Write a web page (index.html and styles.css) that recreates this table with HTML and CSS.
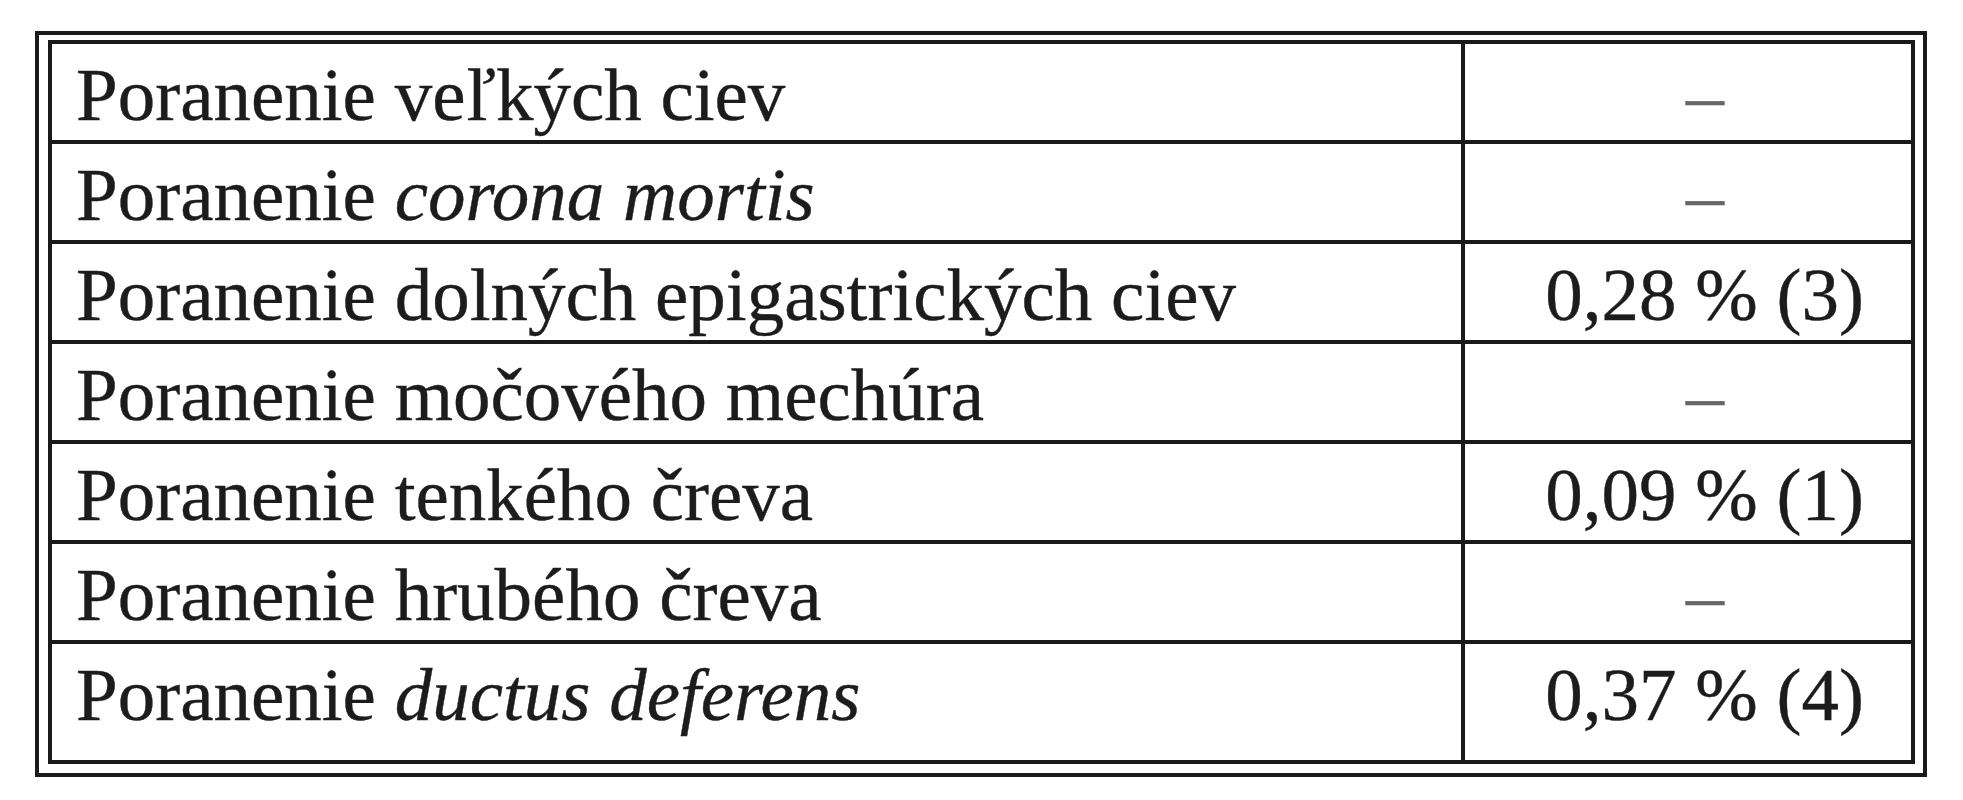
FILE: index.html
```html
<!DOCTYPE html>
<html lang="sk">
<head>
<meta charset="utf-8">
<title>Poranenia</title>
<link rel="stylesheet" href="styles.css">
</head>
<body>
<div class="frame">
  <div class="table">
    <div class="row">
      <div class="cell label">Poranenie veľkých ciev</div>
      <div class="cell value dash">–</div>
    </div>
    <div class="row">
      <div class="cell label">Poranenie <i>corona mortis</i></div>
      <div class="cell value dash">–</div>
    </div>
    <div class="row">
      <div class="cell label">Poranenie dolných epigastrických ciev</div>
      <div class="cell value">0,28 % (3)</div>
    </div>
    <div class="row">
      <div class="cell label">Poranenie močového mechúra</div>
      <div class="cell value dash">–</div>
    </div>
    <div class="row">
      <div class="cell label">Poranenie tenkého čreva</div>
      <div class="cell value">0,09 % (1)</div>
    </div>
    <div class="row">
      <div class="cell label">Poranenie hrubého čreva</div>
      <div class="cell value dash">–</div>
    </div>
    <div class="row last">
      <div class="cell label">Poranenie <i>ductus deferens</i></div>
      <div class="cell value">0,37 % (4)</div>
    </div>
  </div>
</div>
</body>
</html>
```

FILE: styles.css
```css
html, body {
  margin: 0;
  padding: 0;
  background: #ffffff;
}

body {
  font-family: "Liberation Serif", "Times New Roman", serif;
  font-size: 75px;
  color: #1c1c1c;
  -webkit-text-stroke: 0.4px #1c1c1c;
}

.frame {
  box-sizing: border-box;
  margin: 31px 0 0 35px;
  width: 1892px;
  height: 746px;
  border: 4px solid #1a1a1a;
  padding: 5px 8px 9px 9px;
}

.table {
  box-sizing: border-box;
  width: 1867px;
  height: 724px;
  border: 4px solid #1a1a1a;
  display: flex;
  flex-direction: column;
}

.row {
  box-sizing: border-box;
  display: flex;
  height: 100px;
  border-bottom: 4px solid #1a1a1a;
}

.row.last {
  height: 116px;
  border-bottom: none;
}

.cell {
  box-sizing: border-box;
  padding-top: 6px;
  line-height: 90px;
  white-space: nowrap;
}

.label {
  width: 1413px;
  padding-left: 24px;
  border-right: 4px solid #1a1a1a;
}

.value {
  width: 446px;
  padding-right: 47px;
  padding-left: 50px;
  text-align: right;
}

.value.dash {
  text-align: center;
  padding-left: 81px;
  color: #666666;
  -webkit-text-stroke: 0.6px #666666;
}
```
